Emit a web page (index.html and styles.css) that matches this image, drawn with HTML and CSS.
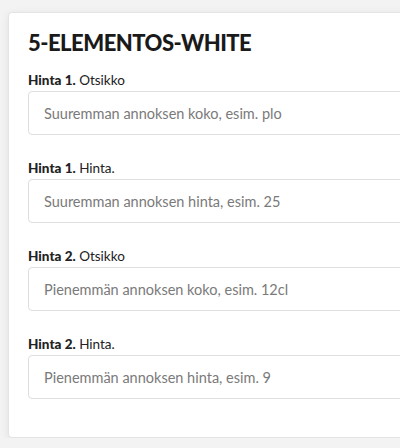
FILE: index.html
```html
<!DOCTYPE html>
<html lang="fi">
<head>
    <meta charset="UTF-8">
    <meta name="viewport" content="width=device-width, initial-scale=1.0">
    <title>5-ELEMENTOS-WHITE</title>
    <link rel="stylesheet" href="styles.css">
</head>
<body>
    <div class="card">
        <h1>5-ELEMENTOS-WHITE</h1>

        <!-- Hinta 1 -->
        <div class="field">
            <label for="size-1"><b>Hinta 1.</b> Otsikko</label>
            <input type="text" id="size-1" placeholder="Suuremman annoksen koko, esim. plo">
        </div>
        <div class="field">
            <label for="price-1"><b>Hinta 1.</b> Hinta.</label>
            <input type="text" id="price-1" placeholder="Suuremman annoksen hinta, esim. 25">
        </div>

        <!-- Hinta 2 -->
        <div class="field">
            <label for="size-2"><b>Hinta 2.</b> Otsikko</label>
            <input type="text" id="size-2" placeholder="Pienemmän annoksen koko, esim. 12cl">
        </div>
        <div class="field">
            <label for="price-2"><b>Hinta 2.</b> Hinta.</label>
            <input type="text" id="price-2" placeholder="Pienemmän annoksen hinta, esim. 9">
        </div>
    </div>
</body>
</html>
```
FILE: styles.css
```css
body {
    margin: 0;
    background-color: #f3f3f3;
    font-family: Lato, "Liberation Sans", sans-serif;
    color: #1c1c1c;
    overflow: hidden;
}
.card {
    margin: 12px 0 0 8px;
    width: 420px;
    background-color: #fff;
    border: 1px solid #e4e4e4;
    border-radius: 4px;
    box-shadow: 0 2px 8px rgba(0, 0, 0, 0.08);
    padding: 17px 0 14px 19px;
}
h1 {
    margin: 0 0 15px;
    font-size: 22px;
    font-weight: 900;
    line-height: 26px;
    letter-spacing: -0.5px;
    color: #1a1a1a;
}
.field {
    margin-bottom: 24px;
}
label {
    display: block;
    font-size: 13.5px;
    line-height: 18px;
    margin-bottom: 2px;
    color: #222;
}
label b {
    font-weight: 900;
}
input[type="text"] {
    display: block;
    box-sizing: border-box;
    width: 100%;
    height: 44px;
    padding: 0 15px;
    border: 1px solid #dedede;
    border-radius: 4px;
    font-family: inherit;
    font-size: 14.5px;
}
input::placeholder {
    color: #7a7a7a;
}
```
